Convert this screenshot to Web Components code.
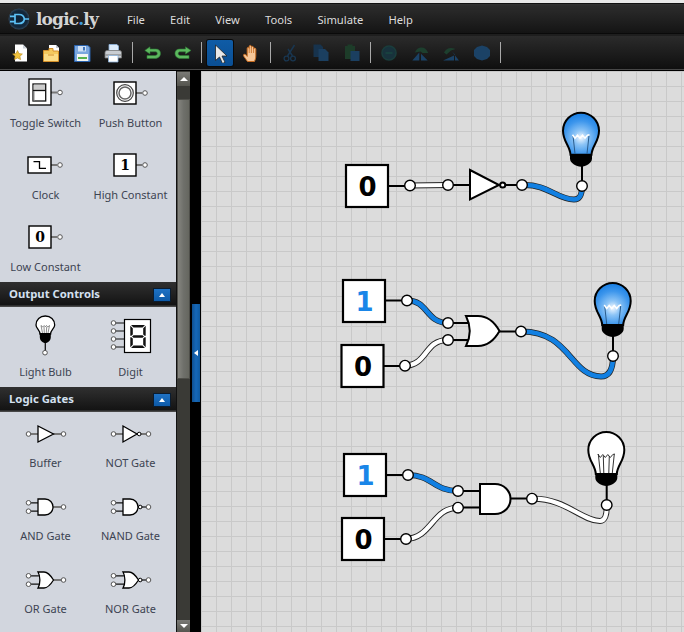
<!DOCTYPE html>
<html><head><meta charset="utf-8"><title>logic.ly</title>
<style>html,body{margin:0;padding:0;width:684px;height:632px;overflow:hidden;background:#000}</style>
</head><body>
<lg-app>
  <lg-menubar slot="menu"><span>File</span><span>Edit</span><span>View</span><span>Tools</span><span>Simulate</span><span>Help</span></lg-menubar>
  <lg-toolbar slot="tools"></lg-toolbar>
  <lg-palette slot="palette">
    <lg-grid style="--gap:12px;--pb:7px">
      <lg-item label="Toggle Switch" icon="toggle"></lg-item><lg-item label="Push Button" icon="push"></lg-item>
      <lg-item label="Clock" icon="clock"></lg-item><lg-item label="High Constant" icon="high"></lg-item>
      <lg-item label="Low Constant" icon="low"></lg-item>
    </lg-grid>
    <lg-section>Output Controls</lg-section>
    <lg-grid style="--gap:0px;--pb:7px">
      <lg-item label="Light Bulb" icon="bulb" h="57"></lg-item><lg-item label="Digit" icon="digit" h="57"></lg-item>
    </lg-grid>
    <lg-section>Logic Gates</lg-section>
    <lg-grid style="--gap:14px;--pb:0px">
      <lg-item label="Buffer" icon="buffer" h="43"></lg-item><lg-item label="NOT Gate" icon="not" h="43"></lg-item>
      <lg-item label="AND Gate" icon="and" h="43"></lg-item><lg-item label="NAND Gate" icon="nand" h="43"></lg-item>
      <lg-item label="OR Gate" icon="or" h="43"></lg-item><lg-item label="NOR Gate" icon="nor" h="43"></lg-item>
    </lg-grid>
  </lg-palette>
  <lg-scrollbar slot="scroll"></lg-scrollbar>
  <lg-splitter slot="split"></lg-splitter>
  <lg-canvas slot="canvas"></lg-canvas>
</lg-app>
<script>
const def=(name,html,setup)=>customElements.define(name,class extends HTMLElement{
  constructor(){super();this.attachShadow({mode:'open'});}
  connectedCallback(){const h=typeof html==='function'?html(this):html;this.shadowRoot.innerHTML=h;if(setup)setup(this);}
});
const FONT='"Noto Sans","DejaVu Sans",sans-serif';

def('lg-app',`<style>
:host{display:grid;grid-template-columns:177px 13px 11px 1fr;grid-template-rows:auto auto 1fr;width:684px;height:632px;overflow:hidden;background:#000}
.top{grid-column:1/-1}.p{min-height:0;overflow:hidden}
</style>
<div class="top"><slot name="menu"></slot></div><div class="top"><slot name="tools"></slot></div>
<div class="p"><slot name="palette"></slot></div><div class="p"><slot name="scroll"></slot></div>
<div class="p"><slot name="split"></slot></div><div class="p"><slot name="canvas"></slot></div>`);

const LOGO=`<svg width="24" height="24" viewBox="0 0 24 24"><defs><radialGradient id="lg" cx=".5" cy=".5" r=".5"><stop offset="0" stop-color="#0d2238"/><stop offset=".8" stop-color="#13283c"/><stop offset="1" stop-color="#30465a"/></radialGradient></defs>
<circle cx="12" cy="12" r="10.5" fill="url(#lg)"/>
<path d="M3 9.3H8M3 14.7H8M8 7.5H12C15 7.5 17 9.5 17.4 12C17 14.5 15 16.5 12 16.5H8ZM17.4 12H22" fill="none" stroke="#5cc0f5" stroke-width="1.7"/></svg>`;

def('lg-menubar',`<style>
:host{display:block;box-sizing:border-box;height:36px;background:linear-gradient(#e9e9e9 0 3px,#111 3px 4px,#333 4px,#2c2c2c 6px,#141414 33px,#000 34px,#3c3c3c 35px,#000 36px);color:#d9d9d9;font:12px/1 ${FONT}}
.r{display:flex;align-items:center;height:36px;padding-top:4px;padding-bottom:2px;box-sizing:border-box;padding-left:7px}
.logo{display:flex;align-items:center;gap:5px;width:120px;box-sizing:border-box}
.t{font:bold 17px "DejaVu Serif",serif;color:#d4d4d4;letter-spacing:-.85px}.t b{color:#3d9be0}
.m{display:flex;gap:25.2px;}
::slotted(span){font:11.2px ${FONT};color:#dcdcdc}
</style><div class="r"><div class="logo">${LOGO}<span class="t">logic<b>.</b>ly</span></div><div class="m"><slot></slot></div></div>`);

const IC={
 new:`<path d="M5 1.5H13L17 5.5V18.5H5Z" fill="#fff"/><path d="M13 1.5V5.5H17Z" fill="#c9ced6"/><path d="M7.5 7.5L9 10.6 12.4 11 9.9 13.3 10.6 16.6 7.5 15 4.4 16.6 5.1 13.3 2.6 11 6 10.6Z" fill="#f0c23c" stroke="#b88a1c" stroke-width=".6"/>`,
 open:`<path d="M8 2H15L18 5V15H8Z" fill="#fff"/><path d="M15 2V5H18Z" fill="#c5cad2"/><path d="M2.5 7.5H8V5.5H12V8H17.5V18.5H2.5Z" fill="#f4c95e" stroke="#d5902a"/><path d="M3 11H17V18H3Z" fill="#fbdc86"/><path d="M7 12H13" stroke="#d5902a"/>`,
 save:`<path d="M2.5 2.5H16L18 4.5V18.5H2.5Z" fill="#7aa6de" stroke="#2a62ac"/><path d="M6 3H14V8.5H6Z" fill="#cfe0f5"/><path d="M11 4H13V7.5H11Z" fill="#3d74bc"/><path d="M5 11H16V18H5Z" fill="#f3f6f2"/><path d="M6 14H15V16H6Z" fill="#58b24e"/>`,
 print:`<path d="M6 1.5H14L15.5 3V9H6Z" fill="#dcebfb" stroke="#8db2dc" stroke-width=".8"/><path d="M2 9.5Q2 7.5 4 7.5H16.5Q18.5 7.5 18.5 9.5V15H2Z" fill="#c9cdd2" stroke="#777" stroke-width=".8"/><path d="M2.5 12H18" stroke="#777"/><path d="M5.5 12.5H15V19H5.5Z" fill="#fff" stroke="#8db2dc" stroke-width=".8"/>`,
 undo:`<path d="M8 3.8V6H13.5C17 6 18.5 8 18.5 10.5S16.5 15.5 13 15.5H5V12.5H13C14.4 12.5 15.3 11.8 15.3 10.6S14.5 8.8 13.2 8.8H8V11L2.8 7.4Z" fill="#5cb85e" stroke="#2e7a35" stroke-width=".6"/>`,
 redo:`<path d="M12.5 3.8V6H7C3.5 6 2 8 2 10.5S4 15.5 7.5 15.5H16V12.5H7.5C6.1 12.5 5.2 11.8 5.2 10.6S6 8.8 7.3 8.8H12.5V11L18 7.4Z" fill="#5cb85e" stroke="#2e7a35" stroke-width=".6"/>`,
 arrow:`<path d="M5.5 2V17.5L9.5 14 12.5 20.5 15 19.3 12 13H17Z" fill="#e8e8e8" stroke="#222" stroke-width=".8"/>`,
 hand:`<path d="M6.5 18.5C5 16 2.5 13.5 2.5 12.2 2.5 11 4 11 5.2 12.2L6.2 13.4V5.5C6.2 4 8.2 4 8.2 5.5V3.5C8.2 2 10.4 2 10.4 3.5V4.5C10.4 3 12.6 3 12.6 4.6V6C12.6 4.8 14.8 4.8 14.8 6.2V13C14.8 15.5 14 17 13.5 18.5Z" fill="#f5c79a" stroke="#c66a1e"/><path d="M8.2 5.5V10M10.4 4.5V10M12.6 6V10" stroke="#c66a1e" stroke-width=".8"/>`,
 cut:`<path d="M14.5 2L7.5 13M8 6L12.5 13" stroke="#193650" stroke-width="1.5" fill="none"/><circle cx="6.5" cy="15.5" r="2.4" fill="none" stroke="#193650" stroke-width="1.3"/><circle cx="13" cy="15.5" r="2.4" fill="none" stroke="#193650" stroke-width="1.3"/>`,
 copy:`<path d="M2.5 1.5H9.5L12 4V14H2.5Z" fill="#17334d"/><path d="M7.5 6H14L17.5 9.5V18H7.5Z" fill="#1b3f60"/>`,
 paste:`<path d="M3 3H13V16H3Z" fill="#1d3c29"/><path d="M5.5 1.5H10.5V4H5.5Z" fill="#1d3c29"/><path d="M8.5 8H17.5V18H8.5Z" fill="#1b3f60"/>`,
 sim:`<circle cx="10" cy="10" r="7" fill="#18323c" stroke="#1a3d3c" stroke-width="1.6"/><path d="M6.5 10H13.5" stroke="#1a4640" stroke-width="1.6"/>`,
 front:`<path d="M5 9.500C6.500 5.500 9 4.500 11.700 4.500S16.500 6 18.300 10L12.500 10 10.500 8.500Z" fill="#1d3f2e"/><path d="M2.300 17.500L9.300 9.500V17.500ZM11 10.800L17.700 17.500H11Z" fill="#1b4266"/>`,
 back:`<path d="M3 9.500C5 5.500 9 3.500 14.500 6L10 7.500 5.500 11.500Z" fill="#1d3f2e"/><path d="M2 17.500L13 12.500V17.500ZM11 8.500L18 17.500H14V11.500Z" fill="#1b4266"/>`,
 group:`<path d="M10 2.500L15 4 18 7V13L15 16 10 17.500 5 16 2 13V7L5 4Z" fill="#1b4266"/>`
};
def('lg-tool',e=>`<style>
:host{display:flex;width:31px;height:33px;align-items:center;justify-content:center}
.b{width:26px;height:26px;display:flex;align-items:center;justify-content:center;box-sizing:border-box;border-radius:2px}
:host([active]) .b{background:linear-gradient(#0f5ca6,#0a4f94);box-shadow:0 0 0 1px #0a0a0a}
</style><div class="b"><svg width="20" height="20" viewBox="0 0 20 20">${IC[e.getAttribute('i')]}</svg></div>`);
def('lg-sep',`<style>:host{display:flex;align-items:center;justify-content:center;height:33px;width:var(--w,8px)}
i{display:block;width:1px;height:21px;background:#a9a9a9}</style><i></i>`);

def('lg-toolbar',`<style>
:host{display:flex;box-sizing:border-box;height:35px;padding:0 0 0 4px;background:linear-gradient(#2b2b2b,#0f0f0f 33px,#4a4a4a 33px,#444 34px,#000 34px)}
.r{display:flex;height:33px;align-items:center}
</style><div class="r">
<lg-tool i="new"></lg-tool><lg-tool i="open"></lg-tool><lg-tool i="save"></lg-tool><lg-tool i="print"></lg-tool><lg-sep></lg-sep>
<lg-tool i="undo"></lg-tool><lg-tool i="redo"></lg-tool><lg-sep style="--w:6px"></lg-sep>
<lg-tool i="arrow" active></lg-tool><lg-tool i="hand"></lg-tool><lg-sep></lg-sep>
<lg-tool i="cut"></lg-tool><lg-tool i="copy"></lg-tool><lg-tool i="paste"></lg-tool><lg-sep style="--w:6px"></lg-sep>
<lg-tool i="sim"></lg-tool><lg-tool i="front"></lg-tool><lg-tool i="back"></lg-tool><lg-tool i="group"></lg-tool><lg-sep style="--w:6px"></lg-sep>
</div>`);

def('lg-palette',`<style>:host{display:block;width:176px;height:100%;background:#d2d6de;border-right:1px solid #111;box-sizing:content-box;overflow:hidden}</style><slot></slot>`);
def('lg-grid',`<style>:host{display:grid;grid-template-columns:85px 85px;row-gap:var(--gap);padding:0 3px var(--pb)}</style><slot></slot>`);
def('lg-section',`<style>
:host{display:flex;align-items:center;justify-content:space-between;box-sizing:border-box;height:25px;padding:0 5px 0 9px;background:linear-gradient(#303030,#141414 90%,#555);color:#d4e0f0;font:bold 11.3px ${FONT}}
.x{margin-top:-2px}
.b{width:18px;height:14px;box-sizing:border-box;border:1px solid #0a1c30;background:linear-gradient(#1f72c4,#0d5aa8);display:flex;align-items:center;justify-content:center}
.b i{width:0;height:0;border:3.5px solid transparent;border-top:0;border-bottom:4px solid #fff}
</style><span class="x"><slot></slot></span><div class="b"><i></i></div>`);

const ln='stroke="#777" stroke-width="2"',blk='stroke="#111" stroke-width="1.2"';
const nd=(x,y)=>`<circle cx="${x}" cy="${y}" r="2.3" fill="#fff" stroke="#555" stroke-width="1"/>`;
const srcIcon=(inner,x0=26,y0=11,w=22,h=22,b=1.4)=>`<path d="M${x0+w} 22H54" ${ln}/><rect x="${x0}" y="${y0}" width="${w}" height="${h}" fill="#fff" stroke="#000" stroke-width="${b}"/>${inner}${nd(57,22)}`;
const numT=t=>`<text x="37" y="26.800" text-anchor="middle" font-family="DejaVu Serif" font-weight="bold" font-size="14" fill="#000">${t}</text>`;
const AND=`M35 14H42C47 14 50 18 50 22S47 30 42 30H35Z`;
const OR=`M35 14H41C45 14 48 18 50.500 22C48 26 45 30 41 30H35C37.500 26 37.500 18 35 14Z`;
const gate2=(shape,neg)=>`<path d="M25.500 17.800H36M25.500 26.200H36" ${blk} fill="none"/><path d="M50 22H58" ${neg?'stroke="#111" stroke-width="1.200"':ln}/>
<path d="${shape}" fill="#fff" stroke="#000" stroke-width="1.300"/>${neg?'<circle cx="52.200" cy="22" r="1.800" fill="#fff" stroke="#000"/>':''}${nd(25.500,17.800)}${nd(25.500,26.200)}${nd(60.500,22)}`;
const seg=`<g fill="#111"><path d="M43 18H57L54.500 20.500H45.500ZM43 41H57L54.500 38.500H45.500ZM44 29.500L45.500 28.200H54.500L56 29.500 54.500 30.800H45.500Z"/><path d="M42.300 18.700L44.800 21.200V27.500L43 29 42.300 28.500ZM57.700 18.700L55.200 21.200V27.500L57 29 57.700 28.500ZM42.300 40.300L44.800 37.800V31.500L43 30 42.300 30.500ZM57.700 40.300L55.200 37.800V31.500L57 30 57.700 30.500Z"/></g>`;
const smallBulb=`<path d="M42.300 45V34" stroke="#111" stroke-width="1.300"/><path d="M37 27C37 23 33 21.500 33 18 33 12.500 37 9 42.300 9S51.700 12.500 51.700 18C51.700 21.500 47.600 23 47.600 27Z" fill="#fff" stroke="#000" stroke-width="1.300"/><path d="M36.800 26H47.800V30C47.800 33.500 45 36 42.300 36S36.800 33.500 36.800 30Z" fill="#000"/><path d="M39.500 26L38 18.500 39.800 20 41.200 18.500 42.300 20 43.500 18.500 44.800 20 46.500 18.500 45 26M41.300 26L41 20M43.300 26L43.700 20" fill="none" stroke="#444" stroke-width=".6"/>${nd(42,45.700)}`;
const ICONS={
 toggle:`<path d="M48 21.500H54" ${ln}/><rect x="26" y="8" width="22" height="26" fill="#fff" stroke="#000" stroke-width="1.300"/><rect x="30" y="13" width="12.700" height="17" fill="#fff" stroke="#111" stroke-width="1.300"/><path d="M30.700 13.700H42V19.500H30.700Z" fill="#ccc"/><path d="M30 19.500H42.700" stroke="#111" stroke-width="1.300"/><path d="M31 20V30" stroke="#888"/>${nd(57,21.500)}`,
 push:srcIcon(`<circle cx="37" cy="22" r="8.300" fill="#fff" stroke="#444" stroke-width="1.200"/><circle cx="37" cy="22" r="6" fill="#fff" stroke="#666" stroke-width="1.500"/>`),
 clock:srcIcon(`<path d="M30.500 18.700H36.500V25.300H43" fill="none" stroke="#000" stroke-width="1.300"/>`,25,14,23,16),
 high:srcIcon(numT('1')),
 low:srcIcon(numT('0')),
 bulb:smallBulb,
 digit:`<path d="M25.500 16H36M25.500 24H36M25.500 32H36M25.500 40H36" ${blk}/><rect x="36.500" y="12.500" width="26" height="33" fill="#fff" stroke="#000" stroke-width="1.200"/>${seg}${nd(25.500,16)}${nd(25.500,24)}${nd(25.500,32)}${nd(25.500,40)}`,
 buffer:`<path d="M25 22H38M50 22H62" ${ln}/><path d="M35 14L50.500 22 35 30Z" fill="#fff" stroke="#000" stroke-width="1.300"/>${nd(25.500,22)}${nd(60.500,22)}`,
 not:`<path d="M25 22H38" ${ln}/><path d="M51 22H58" ${ln}/><path d="M35 14L49 22 35 30Z" fill="#fff" stroke="#000" stroke-width="1.300"/><circle cx="51.200" cy="22" r="1.800" fill="#fff" stroke="#000"/>${nd(25.500,22)}${nd(60.500,22)}`,
 and:gate2(AND),nand:gate2(AND,1),or:gate2(OR),nor:gate2(OR,1)
};
def('lg-item',e=>{const h=e.getAttribute('h')||44;return `<style>
:host{display:block;text-align:center;color:#3d4452;font:11px/16px ${FONT}}svg{display:block}
</style><svg width="85" height="${h}" viewBox="0 0 85 ${h}">${ICONS[e.getAttribute('icon')]}</svg><div>${e.getAttribute('label')}</div>`});

def('lg-scrollbar',`<style>
:host{display:flex;flex-direction:column;height:100%;width:13px;background:#3a3a36;box-sizing:border-box;padding-top:1px}
.b{height:14px;flex:none;background:linear-gradient(#7a7a76,#55554f);display:flex;align-items:center;justify-content:center}
.b i{width:0;height:0;border:4px solid transparent;border-top:0;border-bottom:4px solid #fff}
.b.d i{border-bottom:0;border-top:4px solid #fff}
.s{height:13px;flex:none}
.th{height:280px;flex:none;box-sizing:border-box;background:linear-gradient(90deg,#85857f,#6f706b 50%,#65665f);border:1px solid #4e4e49}
.f{flex:1}
</style><div class="b"><i></i></div><div class="s"></div><div class="th"></div><div class="f"></div><div class="b d" style="height:12px"><i></i></div>`);

def('lg-splitter',`<style>
:host{display:block;height:100%;width:11px;box-sizing:border-box;padding:233px 1px 0 2px;background:#000}
.h{height:98px;background:linear-gradient(90deg,#0f4f8f,#1668b8 50%,#0f5aa0);display:flex;align-items:center;justify-content:center}
.h i{width:0;height:0;border:3.5px solid transparent;border-left:0;border-right:4px solid #fff}
</style><div class="h"><i></i></div>`);

/* Free canvas: node positions are the content */
const OFFX=201,OFFY=71;
const nodeC=(x,y)=>`<circle cx="${x}" cy="${y}" r="5.300" fill="#fff" stroke="#000" stroke-width="1.400"/>`;
const box=(x,y,w,h,t,on)=>`<rect x="${x}" y="${y}" width="${w}" height="${h}" fill="#fff" stroke="#000" stroke-width="2.200"/><text x="${x+w/2+.5}" y="${y+h/2+9.500}" text-anchor="middle" font-family="DejaVu Sans" font-weight="bold" font-size="26" fill="${on?'#1a86e8':'#000'}">${t}</text>`;
const wire=(d,on)=>`<path d="${d}" fill="none" stroke="#222" stroke-width="6" stroke-linecap="round"/><path d="${d}" fill="none" stroke="${on?'#1280e2':'#fff'}" stroke-width="${on?4.600:4.200}" stroke-linecap="round"/>`;
const bl=(p)=>`<path d="${p}" fill="none" stroke="#000" stroke-width="2"/>`;
const bulb=(x,y,on)=>`<g transform="translate(${x} ${y})">
<path d="M-10.500 24C-11 15-18 11-18 0A18 18 0 1 1 18 0C18 11 11 15 10.500 24Z" fill="${on?'url(#glow)':'#fff'}" stroke="#000" stroke-width="2"/>
<path d="M-11 23.500H11V28C11 32 5 36 0 36S-11 32-11 28Z" fill="#000"/>
${on?'<path d="M-6 23L-8 5M6 23L8 5" fill="none" stroke="#2a5c8c" stroke-width="1"/>':'<path d="M-6 23L-8 4M-2.500 23L-3 6M2.500 23L3 6M6 23L8 4" fill="none" stroke="#333" stroke-width="1"/>'}
<path d="M-8.500 4L-6 7.500-3.500 4.500-1 7.500 1.500 4.500 4 7.500 6.500 4.500 8.500 4" fill="none" stroke="${on?'#fff':'#333'}" stroke-width="${on?1.500:1}"/></g>`;
def('lg-canvas',`<style>
:host{display:block;height:100%;background-color:#dcdcdc;background-image:linear-gradient(#c9c9c9 1px,transparent 1px),linear-gradient(90deg,#c9c9c9 1px,transparent 1px);background-size:15px 15px;overflow:hidden}
svg{display:block}
</style><svg width="483" height="561" viewBox="${OFFX} ${OFFY} 483 561">
<defs><radialGradient id="glow" gradientUnits="userSpaceOnUse" cx="0" cy="7" r="24"><stop offset="0" stop-color="#f4f9ff"/><stop offset=".3" stop-color="#8cc4f6"/><stop offset=".7" stop-color="#3d96ec"/><stop offset="1" stop-color="#1a80e4"/></radialGradient></defs>

${bl('M388 186H410M448 185H472M505 185H522M582 186V160')}
${wire('M410 185.500L448 185',0)}
${wire('M522 185C548 184 556 199 574 199.500C580 199.500 582 195 582 186',1)}
${box(346,165,42,42,'0')}
<path d="M470 170L499 185 470 199.500Z" fill="#fff" stroke="#000" stroke-width="2"/>
<circle cx="502.700" cy="185" r="2.600" fill="#fff" stroke="#000" stroke-width="2"/>
${bulb(581,130.700,1)}${nodeC(410,185.500)}${nodeC(448,185)}${nodeC(522,185)}${nodeC(582,186)}

${bl('M385 300.500H407M383 366H405M448 323H470M448 340H470M499 331.500H521M613 356V325')}
${wire('M407 300.500C428 300 426 323 448 323',1)}
${wire('M405 365.700C428 365 424 340 448 340',0)}
${wire('M521 331.500C570 331 570 376 601 376.500C610 376.500 613 368 613 356',1)}
${box(343,280,42,42,'1',1)}${box(341.500,345,42,42,'0')}
<path d="M466 316H478C488 316 495 323 499.500 331C495 339 488 346 478 346H466C471 336 471 326 466 316Z" fill="#fff" stroke="#000" stroke-width="2"/>
${bulb(612.700,301,1)}${nodeC(407,300.500)}${nodeC(405,365.700)}${nodeC(448,323)}${nodeC(448,340)}${nodeC(521,331.500)}${nodeC(613,356)}

${bl('M386 475H408M384 539H406M458 491H482M458 507.500H482M510 498.500H532M606.700 505V480')}
${wire('M408 475C432 475 434 491 458 491',1)}
${wire('M406 539C432 538 432 508 458 507.700',0)}
${wire('M532 498.700C565 498 582 521 600 521C605 521 607 515 606.700 505',0)}
${box(344,454,42,42,'1',1)}${box(342,518,42,42,'0')}
<path d="M480 484H495C504 484 510.500 491 510.500 499S504 514 495 514H480Z" fill="#fff" stroke="#000" stroke-width="2"/>
${bulb(606.300,450,0)}${nodeC(408,475)}${nodeC(406,539)}${nodeC(458,491)}${nodeC(458,507.700)}${nodeC(532,498.700)}${nodeC(606.700,505)}
</svg>`);
</script>
</body></html>
